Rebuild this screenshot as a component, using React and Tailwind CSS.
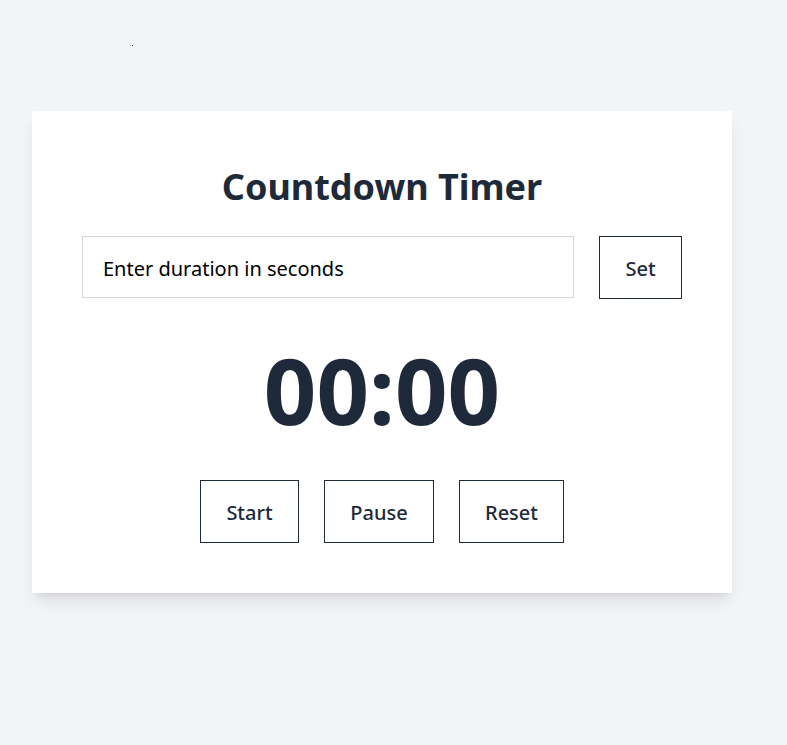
import React, { useState, useEffect, useRef } from 'react';

const font = { fontFamily: '"Noto Sans", "Open Sans", sans-serif' };

const fmt = (s) => {
  const m = Math.floor(s / 60);
  const r = s % 60;
  return `${String(m).padStart(2, '0')}:${String(r).padStart(2, '0')}`;
};

const App = () => {
  const [input, setInput] = useState('');
  const [duration, setDuration] = useState(0);
  const [left, setLeft] = useState(0);
  const [running, setRunning] = useState(false);
  const timer = useRef(null);

  useEffect(() => {
    if (!running) return;
    timer.current = setInterval(() => {
      setLeft((t) => {
        if (t <= 1) {
          setRunning(false);
          return 0;
        }
        return t - 1;
      });
    }, 1000);
    return () => clearInterval(timer.current);
  }, [running]);

  const handleSet = () => {
    const n = parseInt(input, 10);
    if (!isNaN(n) && n > 0) {
      setDuration(n);
      setLeft(n);
      setRunning(false);
    }
  };

  const btn =
    'h-[63px] border border-gray-800 bg-white pt-[2px] text-[20px] font-medium text-gray-800 hover:bg-gray-50';

  return (
    <div className="min-h-[745px] bg-gray-100 pt-[45px]" style={font}>
      <div className="ml-[132px] h-px w-px bg-gray-800" />
      <div className="ml-[32px] mt-[65px] w-[700px] bg-white px-[50px] pt-[50px] pb-[50px] shadow-lg">
        <h1 className="text-center text-[36px] font-bold leading-[52px] text-gray-800">
          Countdown Timer
        </h1>
        <div className="mt-[23px] flex gap-[25px]">
          <input
            type="number"
            value={input}
            onChange={(e) => setInput(e.target.value)}
            placeholder="Enter duration in seconds"
            className="h-[62px] flex-1 border border-gray-300 px-[20px] pt-[3px] text-[20px] text-black placeholder:text-black outline-none"
          />
          <button className={`${btn} h-[62px] w-[83px]`} onClick={handleSet}>
            Set
          </button>
        </div>
        <div className="mt-[24px] text-center text-[92px] font-bold leading-[134px] text-gray-800">
          {fmt(left)}
        </div>
        <div className="mt-[23px] flex justify-center gap-[25px]">
          <button className={`${btn} w-[99px]`} onClick={() => left > 0 && setRunning(true)}>
            Start
          </button>
          <button className={`${btn} w-[110px]`} onClick={() => setRunning(false)}>
            Pause
          </button>
          <button
            className={`${btn} w-[105px]`}
            onClick={() => {
              setRunning(false);
              setLeft(duration);
            }}
          >
            Reset
          </button>
        </div>
      </div>
    </div>
  );
};

export default App;
